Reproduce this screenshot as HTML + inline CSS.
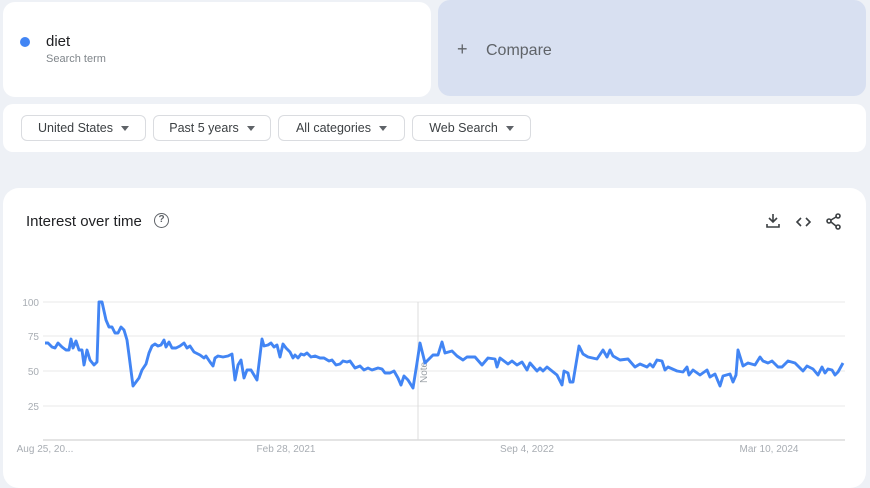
<!DOCTYPE html>
<html><head><style>
*{margin:0;padding:0;box-sizing:border-box}
body{width:870px;height:468px;background:#eef1f6;font-family:"Liberation Sans",Arial,sans-serif;position:relative;overflow:hidden}
.c{position:absolute;background:#fff}
.chip{position:absolute;top:115px;height:26px;border:1px solid #dadce0;border-radius:6px;font-size:12.5px;color:#3c4043;display:flex;align-items:center;justify-content:center;gap:8px}
.tri{width:0;height:0;border-left:4px solid transparent;border-right:4px solid transparent;border-top:5px solid #5f6368}
</style></head><body>
<div class="c" style="left:3px;top:2px;width:428px;height:95px;border-radius:12px"></div>
<div style="position:absolute;left:20px;top:37px;width:10px;height:10px;border-radius:50%;background:#4285f4"></div>
<div style="position:absolute;left:46px;top:33px;font-size:15px;color:#202124">diet</div>
<div style="position:absolute;left:46px;top:53px;font-size:11px;color:#80868b">Search term</div>
<div style="position:absolute;left:438px;top:0;width:428px;height:96px;border-radius:12px;background:#d8e0f1"></div>
<div style="position:absolute;left:457px;top:39px;font-size:18px;color:#5f6368;font-weight:300">+</div>
<div style="position:absolute;left:486px;top:42px;font-size:16px;color:#5f6368">Compare</div>
<div class="c" style="left:3px;top:104px;width:863px;height:48px;border-radius:10px"></div>
<div class="chip" style="left:21px;width:125px">United States <span class="tri"></span></div>
<div class="chip" style="left:153px;width:118px">Past 5 years <span class="tri"></span></div>
<div class="chip" style="left:278px;width:127px">All categories <span class="tri"></span></div>
<div class="chip" style="left:412px;width:119px">Web Search <span class="tri"></span></div>
<div class="c" style="left:3px;top:188px;width:863px;height:300px;border-radius:16px"></div>
<div style="position:absolute;left:26px;top:213px;font-size:15px;color:#202124">Interest over time</div>
<div style="position:absolute;left:154px;top:213px;width:15px;height:15px;border:1.5px solid #5f6368;border-radius:50%;font-size:10px;color:#5f6368;text-align:center;line-height:12px;font-weight:bold">?</div>
<svg style="position:absolute;left:0;top:0" width="870" height="468">
<g stroke="#3c4043" stroke-width="1.6" fill="none">
<path d="M773 214v8M769 218l4 4 4-4M767 224v3h12v-3"/>
<path d="M801 218l-4 4 4 4M806 218l4 4-4 4"/>
<circle cx="838" cy="216" r="2"/><circle cx="829" cy="221" r="2"/><circle cx="838" cy="227" r="2"/><path d="M831 220l5-3M831 222l5 4"/>
</g>
<g stroke="#e8e8e8" stroke-width="1">
<path d="M43 302H845M43 336H845M43 371H845M43 406H845"/></g>
<path d="M43 440H845" stroke="#c8c8c8"/>
<path d="M418 302V440" stroke="#ddd"/>
<g font-size="10" fill="#a8adb3" text-anchor="end">
<text x="39" y="306">100</text><text x="39" y="340">75</text><text x="39" y="375">50</text><text x="39" y="410">25</text></g>
<g font-size="10" fill="#a8adb3" text-anchor="middle">
<text x="45" y="452">Aug 25, 20...</text><text x="286" y="452">Feb 28, 2021</text><text x="527" y="452">Sep 4, 2022</text><text x="769" y="452">Mar 10, 2024</text></g>
<text x="0" y="0" font-size="10" fill="#9aa0a6" transform="translate(427,383) rotate(-90)">Note</text>
<polyline fill="none" stroke="#4285f4" stroke-width="2.9" stroke-linejoin="round" points="45,343 48,343 52,347 55,348 58,343 62,347 66,350 69,350 71,339 73,348 76,341 79,350 82,350 84,365 87,350 90,360 94,365 97,362 99,302 102,302 106,320 109,327 112,327 115,333 118,333 121,327 124,330 127,340 129,355 133,386 136,382 139,378 142,370 146,364 149,353 152,346 155,344 158,346 161,345 164,340 166,347 169,342 172,348 176,348 180,346 184,343 187,348 190,346 194,352 198,354 200,355 204,358 206,356 210,362 213,366 215,358 218,356 223,357 228,356 232,354 235,380 238,365 241,360 244,378 247,370 251,370 254,375 257,380 262,339 264,346 268,345 271,343 274,347 277,345 280,357 283,344 286,348 290,352 293,358 295,355 298,358 301,354 304,355 307,353 311,357 315,356 320,358 324,358 329,361 332,360 336,365 340,364 343,361 347,362 350,361 355,368 360,366 364,370 368,368 372,370 378,368 382,369 385,373 390,373 394,371 398,378 401,385 404,376 408,380 413,388 417,363 420,343 425,363 428,360 433,355 438,355 442,342 445,353 452,351 457,356 463,360 467,357 475,357 482,365 488,358 495,359 497,367 500,358 508,364 512,361 517,365 522,362 527,370 530,363 537,371 540,368 543,371 547,367 552,371 557,375 562,385 564,371 568,373 570,382 573,382 579,346 583,354 588,357 597,359 603,350 607,357 610,350 613,356 620,360 628,359 635,367 640,364 647,367 650,364 653,367 657,360 662,361 665,370 668,367 677,371 683,372 687,367 689,375 693,370 700,375 707,370 710,377 715,374 720,386 723,376 730,374 733,382 736,375 738,350 743,366 748,363 755,365 760,357 763,361 768,363 772,361 778,367 782,367 788,361 795,363 803,371 807,366 813,369 818,375 822,367 825,373 828,369 832,370 835,375 838,372 843,363"/>
</svg>
</body></html>
